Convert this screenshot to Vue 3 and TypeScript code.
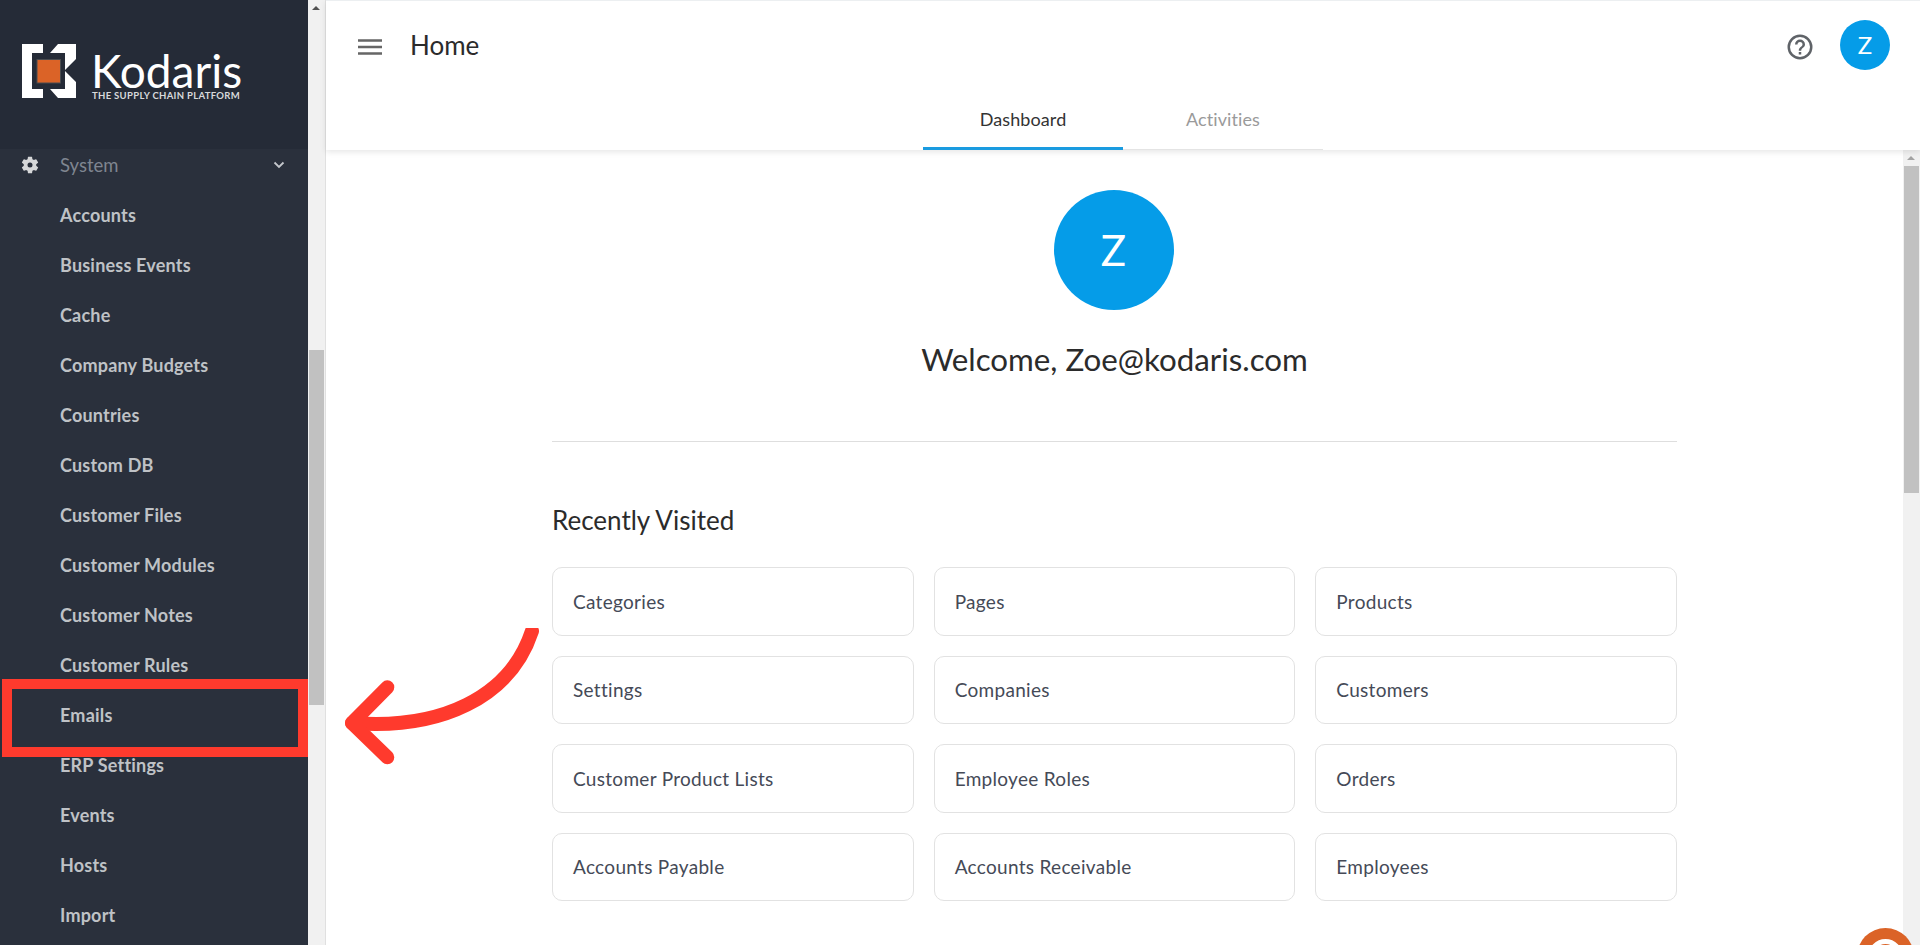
<template>
  <div class="app">
    <aside class="sidebar">
      <div class="brand">
        <svg class="logo-mark" width="54" height="54" viewBox="0 0 54 54">
          <path fill="#fff" d="M0 0H21V9H10V45H21V54H0Z" />
          <path fill="#fff" d="M28 9 36 0H54V15L43 26V9Z" />
          <path fill="#fff" d="M28 45 36 54H54V38L43 27V45Z" />
          <rect x="15" y="15.5" width="23.5" height="23.5" fill="#db6327" stroke="#4a4c50" />
        </svg>
        <div class="wordmark">
          <div class="wordmark-name">Kodaris</div>
          <div class="wordmark-tag">THE SUPPLY CHAIN PLATFORM</div>
        </div>
      </div>
      <div class="menu">
        <div class="menu-group">
          <svg class="gear" width="20" height="20" viewBox="0 0 24 24">
            <path fill="#d6d7d9" fill-rule="evenodd" d="M19.43 12.98c.04-.32.07-.64.07-.98s-.03-.66-.07-.98l2.11-1.65a.5.5 0 0 0 .12-.64l-2-3.46a.5.5 0 0 0-.61-.22l-2.49 1a7.3 7.3 0 0 0-1.69-.98l-.38-2.65A.49.49 0 0 0 14 2h-4a.49.49 0 0 0-.49.42l-.38 2.65c-.61.25-1.17.59-1.69.98l-2.49-1a.5.5 0 0 0-.61.22l-2 3.46a.49.49 0 0 0 .12.64l2.11 1.65c-.04.32-.07.65-.07.98s.03.66.07.98l-2.11 1.65a.5.5 0 0 0-.12.64l2 3.46c.12.22.39.3.61.22l2.49-1c.52.4 1.08.73 1.69.98l.38 2.65c.03.24.24.42.49.42h4c.25 0 .46-.18.49-.42l.38-2.65c.61-.25 1.17-.59 1.69-.98l2.49 1c.23.09.49 0 .61-.22l2-3.46a.5.5 0 0 0-.12-.64zM12 15a3 3 0 1 1 0-6 3 3 0 0 1 0 6z" />
          </svg>
          <span class="menu-group-label">System</span>
          <svg class="chevron" width="12" height="8" viewBox="0 0 12 8">
            <path d="M1.5 1.5 6 6l4.5-4.5" fill="none" stroke="#c4c7cc" stroke-width="1.8" />
          </svg>
        </div>
        <div v-for="item in menuItems" :key="item" class="menu-item">{{ item }}</div>
      </div>
    </aside>
    <div class="bar bar--side">
      <div class="bar-arrow"></div>
      <div class="bar-thumb bar-thumb--side"></div>
    </div>

    <div class="main">
      <header class="topbar">
        <div class="topbar-row">
          <svg class="burger" width="24" height="16" viewBox="0 0 24 16">
            <path d="M0 1.5H24M0 8H24M0 14.5H24" stroke="#666" stroke-width="2.4" />
          </svg>
          <div class="page-title">Home</div>
          <svg class="help" width="30" height="30" viewBox="0 0 24 24">
            <path fill="#5f6368" d="M11 18h2v-2h-2v2zm1-16a10 10 0 1 0 0 20 10 10 0 0 0 0-20zm0 18a8 8 0 1 1 0-16 8 8 0 0 1 0 16zm0-14a4 4 0 0 0-4 4h2a2 2 0 1 1 4 0c0 2-3 1.75-3 5h2c0-2.25 3-2.5 3-5a4 4 0 0 0-4-4z" />
          </svg>
          <div class="avatar-small">Z</div>
        </div>
        <nav class="tabs">
          <div class="tab tab--active">Dashboard</div>
          <div class="tab">Activities</div>
        </nav>
      </header>

      <div class="body">
        <div class="content">
          <div class="avatar-large">Z</div>
          <div class="welcome">Welcome, Zoe@kodaris.com</div>
          <hr class="divider" />
          <h2 class="recent-title">Recently Visited</h2>
          <div class="cards">
            <div v-for="card in recentCards" :key="card" class="card">{{ card }}</div>
          </div>
        </div>
        <div class="bar bar--main">
          <div class="bar-arrow"></div>
          <div class="bar-thumb bar-thumb--main"></div>
        </div>
      </div>
    </div>

    <!-- annotation drawn on top of the screenshot -->
    <div class="highlight"></div>
    <svg class="pointer" width="220" height="170" viewBox="0 0 220 170">
      <path d="M192 3C170 70 100 102 12 95" fill="none" stroke="#ff3a2d" stroke-width="14" stroke-linecap="round" />
      <path d="M47.3 59.3 12 95 47.3 129.3" fill="none" stroke="#ff3a2d" stroke-width="14" stroke-linecap="round" stroke-linejoin="round" />
    </svg>
    <div class="chat-badge"><div class="chat-badge-inner"></div></div>
  </div>
</template>

<script setup lang="ts">
const menuItems: string[] = [
  'Accounts',
  'Business Events',
  'Cache',
  'Company Budgets',
  'Countries',
  'Custom DB',
  'Customer Files',
  'Customer Modules',
  'Customer Notes',
  'Customer Rules',
  'Emails',
  'ERP Settings',
  'Events',
  'Hosts',
  'Import',
]

const recentCards: string[] = [
  'Categories',
  'Pages',
  'Products',
  'Settings',
  'Companies',
  'Customers',
  'Customer Product Lists',
  'Employee Roles',
  'Orders',
  'Accounts Payable',
  'Accounts Receivable',
  'Employees',
]
</script>

<style>
html,
body {
  margin: 0;
  height: 100%;
  overflow: hidden;
  background: #fff;
}
</style>

<style scoped>
.app {
  position: relative;
  display: flex;
  height: 945px;
  overflow: hidden;
  font-family: Lato, "Noto Sans", sans-serif;
  color: #2b2b2b;
}

.sidebar {
  width: 308px;
  flex: none;
  background: #2a303c;
  overflow: hidden;
}

.brand {
  height: 149px;
  box-sizing: border-box;
  padding: 44px 0 0 22px;
  display: flex;
  gap: 15px;
  background: #252b37;
}

.logo-mark {
  flex: none;
}

.wordmark {
  color: #fff;
}

.wordmark-name {
  font-size: 46px;
  line-height: 40px;
  margin-top: 7px;
}

.wordmark-tag {
  padding-left: 1px;
  font-size: 9.5px;
  line-height: 9px;
  letter-spacing: 0.32px;
  font-weight: 700;
  color: #d8d9db;
  white-space: nowrap;
}

.menu-group {
  height: 32px;
  margin-bottom: 9px;
  display: flex;
  align-items: center;
  padding: 0 23px 0 20px;
}

.menu-group-label {
  margin-left: 20px;
  flex: 1;
  font-size: 18.5px;
  color: #7f8590;
}

.menu-item {
  height: 50px;
  line-height: 50px;
  padding-left: 60px;
  font-size: 18px;
  letter-spacing: 0.2px;
  font-weight: 700;
  color: #bfc2c6;
  white-space: nowrap;
}

.bar {
  width: 17px;
  flex: none;
  background: #f1f1f1;
  position: relative;
}

.bar--side {
  border-right: 1px solid #e0e0e0;
}

.bar-arrow {
  position: absolute;
  top: 6px;
  left: 4px;
  border-left: 4px solid transparent;
  border-right: 4px solid transparent;
  border-bottom: 4px solid #505050;
}

.bar--main .bar-arrow {
  border-bottom-color: #a3a3a3;
}

.bar-thumb {
  position: absolute;
  left: 1px;
  right: 1px;
  background: #c1c1c1;
}

.bar-thumb--side {
  top: 350px;
  height: 355px;
}

.bar-thumb--main {
  top: 16px;
  height: 327px;
}

.main {
  flex: 1;
  min-width: 0;
  display: flex;
  flex-direction: column;
}

.topbar {
  height: 150px;
  flex: none;
  box-sizing: border-box;
  border-top: 1px solid #eceff1;
  box-shadow: 0 2px 6px rgba(0, 0, 0, 0.1);
  position: relative;
  z-index: 1;
  display: flex;
  flex-direction: column;
}

.topbar-row {
  height: 90px;
  display: flex;
  align-items: center;
  padding: 0 30px 0 32px;
}

.burger {
  flex: none;
  margin-top: 2px;
}

.page-title {
  flex: 1;
  margin: -2px 0 0 28px;
  font-size: 26px;
}

.help {
  margin: 2px 25px 0 0;
}

.avatar-small {
  width: 50px;
  height: 50px;
  margin-top: -3px;
  border-radius: 50%;
  background: #059ce8;
  color: #fff;
  font-size: 24px;
  display: flex;
  align-items: center;
  justify-content: center;
}

.tabs {
  display: flex;
  justify-content: center;
  height: 59px;
}

.tab {
  width: 200px;
  box-sizing: border-box;
  text-align: center;
  font-size: 18px;
  letter-spacing: 0.1px;
  line-height: 56px;
  color: #9a9a9a;
  border-bottom: 1px solid #e4e4e4;
}

.tab--active {
  color: #333;
  border-bottom: 3px solid #1a9be0;
}

.body {
  flex: 1;
  min-height: 0;
  display: flex;
}

.content {
  flex: 1;
  min-width: 0;
  box-sizing: border-box;
  padding: 40px 226px 0;
  display: flex;
  flex-direction: column;
  align-items: center;
}

.avatar-large {
  width: 120px;
  height: 120px;
  margin-right: 2px;
  border-radius: 50%;
  background: #059ce8;
  color: #fff;
  font-size: 42px;
  display: flex;
  align-items: center;
  justify-content: center;
}

.welcome {
  margin-top: 29px;
  font-size: 31.3px;
  line-height: 40px;
}

.divider {
  width: 100%;
  margin: 62px 0 0;
  border: 0;
  border-top: 1px solid #dedede;
}

.recent-title {
  align-self: flex-start;
  margin: 62px 0 0;
  font-size: 26px;
  line-height: 32px;
  font-weight: 400;
}

.cards {
  width: 100%;
  margin-top: 31px;
  display: grid;
  grid-template-columns: repeat(3, 1fr);
  grid-auto-rows: 68.5px;
  gap: 20px;
}

.card {
  box-sizing: border-box;
  border: 1.5px solid #e2e2e2;
  border-radius: 10px;
  padding-left: 20px;
  display: flex;
  align-items: center;
  font-size: 19px;
  letter-spacing: 0.3px;
  color: #454a57;
}

.highlight {
  position: absolute;
  left: 2px;
  top: 679px;
  width: 306px;
  height: 78px;
  box-sizing: border-box;
  border: 10px solid #ff3a2d;
}

.pointer {
  position: absolute;
  left: 340px;
  top: 628px;
}

.chat-badge {
  position: absolute;
  left: 1857px;
  top: 928px;
  width: 57px;
  height: 57px;
  box-sizing: border-box;
  border-radius: 50%;
  background: #db6327;
  padding: 11px;
}

.chat-badge-inner {
  width: 100%;
  height: 100%;
  box-sizing: border-box;
  border-radius: 50%;
  border: 5px solid #fff;
}
</style>
